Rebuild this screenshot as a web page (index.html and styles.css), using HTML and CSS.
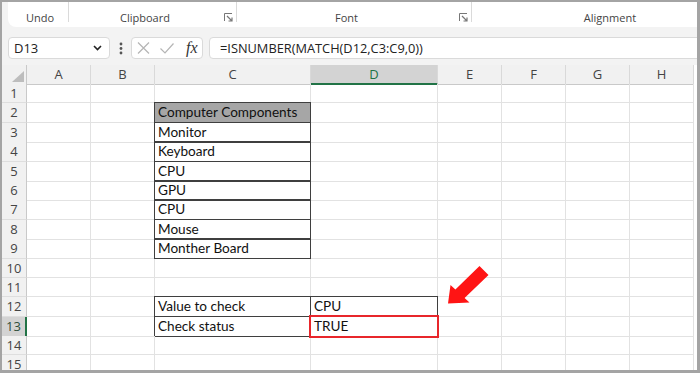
FILE: index.html
```html
<!DOCTYPE html>
<html>
<head>
	<meta charset='utf-8'>
	<title>ISNUMBER MATCH</title>
	<link rel="stylesheet" href="styles.css">
</head>
<body>
	<div class="window">
		<div class="ribbon">
			<div class="group undo"><span>Undo</span></div>
			<div class="group clip"><span>Clipboard</span>
				<svg class="launcher" width="9" height="9" viewBox="0 0 9 9"><path d="M0.5 8V0.5H8" fill="none" stroke="#777" stroke-width="1"/><path d="M3 3L8 8M8 4.5V8H4.5" fill="none" stroke="#777" stroke-width="1.2"/></svg>
			</div>
			<div class="group font"><span>Font</span>
				<svg class="launcher" width="9" height="9" viewBox="0 0 9 9"><path d="M0.5 8V0.5H8" fill="none" stroke="#777" stroke-width="1"/><path d="M3 3L8 8M8 4.5V8H4.5" fill="none" stroke="#777" stroke-width="1.2"/></svg>
			</div>
			<div class="group align"><span>Alignment</span></div>
		</div>

		<div class="formula-bar">
			<div class="name-box">
				<span>D13</span>
				<svg width="9" height="6" viewBox="0 0 9 6"><path d="M1 1L4.5 4.5L8 1" fill="none" stroke="#222" stroke-width="1.6"/></svg>
			</div>
			<div class="dots">
				<svg width="4" height="13" viewBox="0 0 4 13"><circle cx="2" cy="2" r="1.4" fill="#555"/><circle cx="2" cy="6.5" r="1.4" fill="#555"/><circle cx="2" cy="11" r="1.4" fill="#555"/></svg>
			</div>
			<div class="func-box">
				<svg width="13" height="12" viewBox="0 0 13 12"><path d="M1 0.5L12 11.5M12 0.5L1 11.5" stroke="#b5b5b5" stroke-width="1.2"/></svg>
				<svg width="14" height="11" viewBox="0 0 14 11"><path d="M0.5 5.5L5 10L13.5 0.5" fill="none" stroke="#b5b5b5" stroke-width="1.2"/></svg>
				<span class="fx">fx</span>
			</div>
			<div class="formula">=ISNUMBER(MATCH(D12,C3:C9,0))</div>
		</div>

		<div class="sheet">
			<div class="row head">
				<div class="corner"><svg width="12" height="11" viewBox="0 0 12 11"><path d="M0 11L12 0V11Z" fill="#bdbdbd"/></svg></div>
				<div class="col">A</div><div class="col">B</div><div class="col">C</div><div class="col active">D</div>
				<div class="col">E</div><div class="col">F</div><div class="col">G</div><div class="col">H</div>
			</div>
			<div class="row">
				<div class="num">1</div><div class="cell"></div><div class="cell"></div><div class="cell"></div><div class="cell"></div>
				<div class="cell"></div><div class="cell"></div><div class="cell"></div><div class="cell"></div>
			</div>
			<div class="row">
				<div class="num">2</div><div class="cell"></div><div class="cell"></div><div class="cell box th">Computer Components</div><div class="cell"></div>
				<div class="cell"></div><div class="cell"></div><div class="cell"></div><div class="cell"></div>
			</div>
			<div class="row">
				<div class="num">3</div><div class="cell"></div><div class="cell"></div><div class="cell box">Monitor</div><div class="cell"></div>
				<div class="cell"></div><div class="cell"></div><div class="cell"></div><div class="cell"></div>
			</div>
			<div class="row">
				<div class="num">4</div><div class="cell"></div><div class="cell"></div><div class="cell box">Keyboard</div><div class="cell"></div>
				<div class="cell"></div><div class="cell"></div><div class="cell"></div><div class="cell"></div>
			</div>
			<div class="row">
				<div class="num">5</div><div class="cell"></div><div class="cell"></div><div class="cell box">CPU</div><div class="cell"></div>
				<div class="cell"></div><div class="cell"></div><div class="cell"></div><div class="cell"></div>
			</div>
			<div class="row">
				<div class="num">6</div><div class="cell"></div><div class="cell"></div><div class="cell box">GPU</div><div class="cell"></div>
				<div class="cell"></div><div class="cell"></div><div class="cell"></div><div class="cell"></div>
			</div>
			<div class="row">
				<div class="num">7</div><div class="cell"></div><div class="cell"></div><div class="cell box">CPU</div><div class="cell"></div>
				<div class="cell"></div><div class="cell"></div><div class="cell"></div><div class="cell"></div>
			</div>
			<div class="row">
				<div class="num">8</div><div class="cell"></div><div class="cell"></div><div class="cell box">Mouse</div><div class="cell"></div>
				<div class="cell"></div><div class="cell"></div><div class="cell"></div><div class="cell"></div>
			</div>
			<div class="row">
				<div class="num">9</div><div class="cell"></div><div class="cell"></div><div class="cell box">Monther Board</div><div class="cell"></div>
				<div class="cell"></div><div class="cell"></div><div class="cell"></div><div class="cell"></div>
			</div>
			<div class="row">
				<div class="num">10</div><div class="cell"></div><div class="cell"></div><div class="cell"></div><div class="cell"></div>
				<div class="cell"></div><div class="cell"></div><div class="cell"></div><div class="cell"></div>
			</div>
			<div class="row">
				<div class="num">11</div><div class="cell"></div><div class="cell"></div><div class="cell"></div><div class="cell"></div>
				<div class="cell"></div><div class="cell"></div><div class="cell"></div><div class="cell"></div>
			</div>
			<div class="row">
				<div class="num">12</div><div class="cell"></div><div class="cell"></div><div class="cell box">Value to check</div><div class="cell box">CPU</div>
				<div class="cell"></div><div class="cell"></div><div class="cell"></div><div class="cell"></div>
			</div>
			<div class="row">
				<div class="num active">13</div><div class="cell"></div><div class="cell"></div><div class="cell box">Check status</div><div class="cell box picked">TRUE</div>
				<div class="cell"></div><div class="cell"></div><div class="cell"></div><div class="cell"></div>
			</div>
			<div class="row">
				<div class="num">14</div><div class="cell"></div><div class="cell"></div><div class="cell"></div><div class="cell"></div>
				<div class="cell"></div><div class="cell"></div><div class="cell"></div><div class="cell"></div>
			</div>
			<div class="row">
				<div class="num">15</div><div class="cell"></div><div class="cell"></div><div class="cell"></div><div class="cell"></div>
				<div class="cell"></div><div class="cell"></div><div class="cell"></div><div class="cell"></div>
			</div>
		</div>

		<!-- red pointer arrow drawn over the sheet -->
		<svg class="arrow" width="56" height="50" viewBox="440 260 56 50">
			<polygon points="448,303.5 469.5,302.5 464.6,298 488.5,275 479.5,266 455.4,289.4 450.5,285" fill="#ff1414"/>
		</svg>
	</div>
</body>
</html>
```

FILE: styles.css
```css
* {
	margin: 0;
	padding: 0;
	box-sizing: border-box;
}
body {
	background: #fff;
	font-family: "Open Sans", "Noto Sans", sans-serif;
}
.window {
	position: relative;
	width: 700px;
	height: 373px;
	border: solid #a4a4a4;
	border-width: 2px 3px 3px 2px;
	background: #f3f3f3;
	overflow: hidden;
}

/* ribbon group labels */
.ribbon {
	display: flex;
	height: 25px;
	margin-left: 6px;
	background: #fff;
	border-bottom-left-radius: 8px;
}
.group {
	position: relative;
	display: flex;
	align-items: center;
	justify-content: center;
	padding-top: 5px;
	font-size: 11px;
	color: #444;
	flex-shrink: 0;
}
.group::after {
	content: '';
	position: absolute;
	right: 0;
	top: 0;
	width: 1px;
	height: 20px;
	background: #dadada;
}
.undo { width: 61px; padding-left: 3px; }
.clip { width: 168px; padding-right: 16px; }
.font { width: 235px; padding-right: 16px; }
.align { width: 276px; }
.launcher {
	position: absolute;
	right: 4px;
	top: 11px;
}

/* name box + formula */
.formula-bar {
	display: flex;
	align-items: center;
	padding: 10px 0 3px 6px;
}
.name-box {
	display: flex;
	align-items: center;
	justify-content: space-between;
	width: 102px;
	height: 22px;
	padding: 0 7px 0 5px;
	background: #fff;
	border: 1px solid #dadada;
	border-radius: 4px;
	font-size: 13px;
	color: #222;
}
.dots {
	display: flex;
	justify-content: center;
	width: 21px;
}
.func-box {
	display: flex;
	align-items: center;
	gap: 10px;
	width: 72px;
	height: 22px;
	padding-left: 5px;
	background: #fff;
	border: 1px solid #dadada;
	border-radius: 4px;
}
.fx {
	margin-left: 2px;
	font-family: "Liberation Serif", serif;
	font-style: italic;
	font-size: 16px;
	color: #333;
}
.formula {
	flex: 1;
	height: 22px;
	margin: 0 -6px 0 6px;
	padding-left: 10px;
	background: #fff;
	border: 1px solid #dadada;
	border-radius: 4px;
	font-size: 12.8px;
	line-height: 20px;
	color: #222;
}

/* worksheet grid */
.sheet {
	margin-top: 3px;
	background: #fff;
}
.row {
	display: grid;
	grid-template-columns: 25px 64px 64px 156px 127px 64px 64px 64px 64px;
	height: 19.4px;
}
.row.head {
	height: 19px;
}
.corner, .col {
	background: #f1f1f1;
	border-right: 1px solid #d9d9d9;
	border-bottom: 1px solid #c9c9c9;
}
.corner {
	display: flex;
	align-items: flex-end;
	justify-content: flex-end;
	padding: 0 2px 2px 0;
	border-right-color: #c9c9c9;
}
.col {
	font-size: 13px;
	line-height: 18px;
	text-align: center;
	color: #444;
}
.col.active {
	background: #d3d3d3;
	border-bottom: 2px solid #217346;
	color: #217346;
}
.num {
	background: #f1f1f1;
	border-right: 1px solid #c9c9c9;
	border-bottom: 1px solid #dedede;
	font-size: 13px;
	line-height: 18px;
	text-align: center;
	color: #444;
}
.num.active {
	background: #d3d3d3;
	border-right: 2px solid #217346;
	color: #2f4f3b;
}
.cell {
	position: relative;
	padding-left: 3px;
	border-right: 1px solid #e2e2e2;
	border-bottom: 1px solid #e2e2e2;
	font-family: Lato, "Open Sans", sans-serif;
	font-size: 13.6px;
	line-height: 19px;
	color: #111;
	white-space: nowrap;
}
.box::after {
	content: '';
	position: absolute;
	top: -1px;
	left: -1px;
	right: -1px;
	bottom: -1px;
	border: 1px solid #3f3f3f;
}
.th {
	background: #a6a6a6;
}
.picked::before {
	content: '';
	position: absolute;
	top: -2px;
	left: -2px;
	right: -2px;
	bottom: -2px;
	border: 2px solid #e8262b;
	z-index: 2;
}
.arrow {
	position: absolute;
	left: 438px;
	top: 258px;
}
```
